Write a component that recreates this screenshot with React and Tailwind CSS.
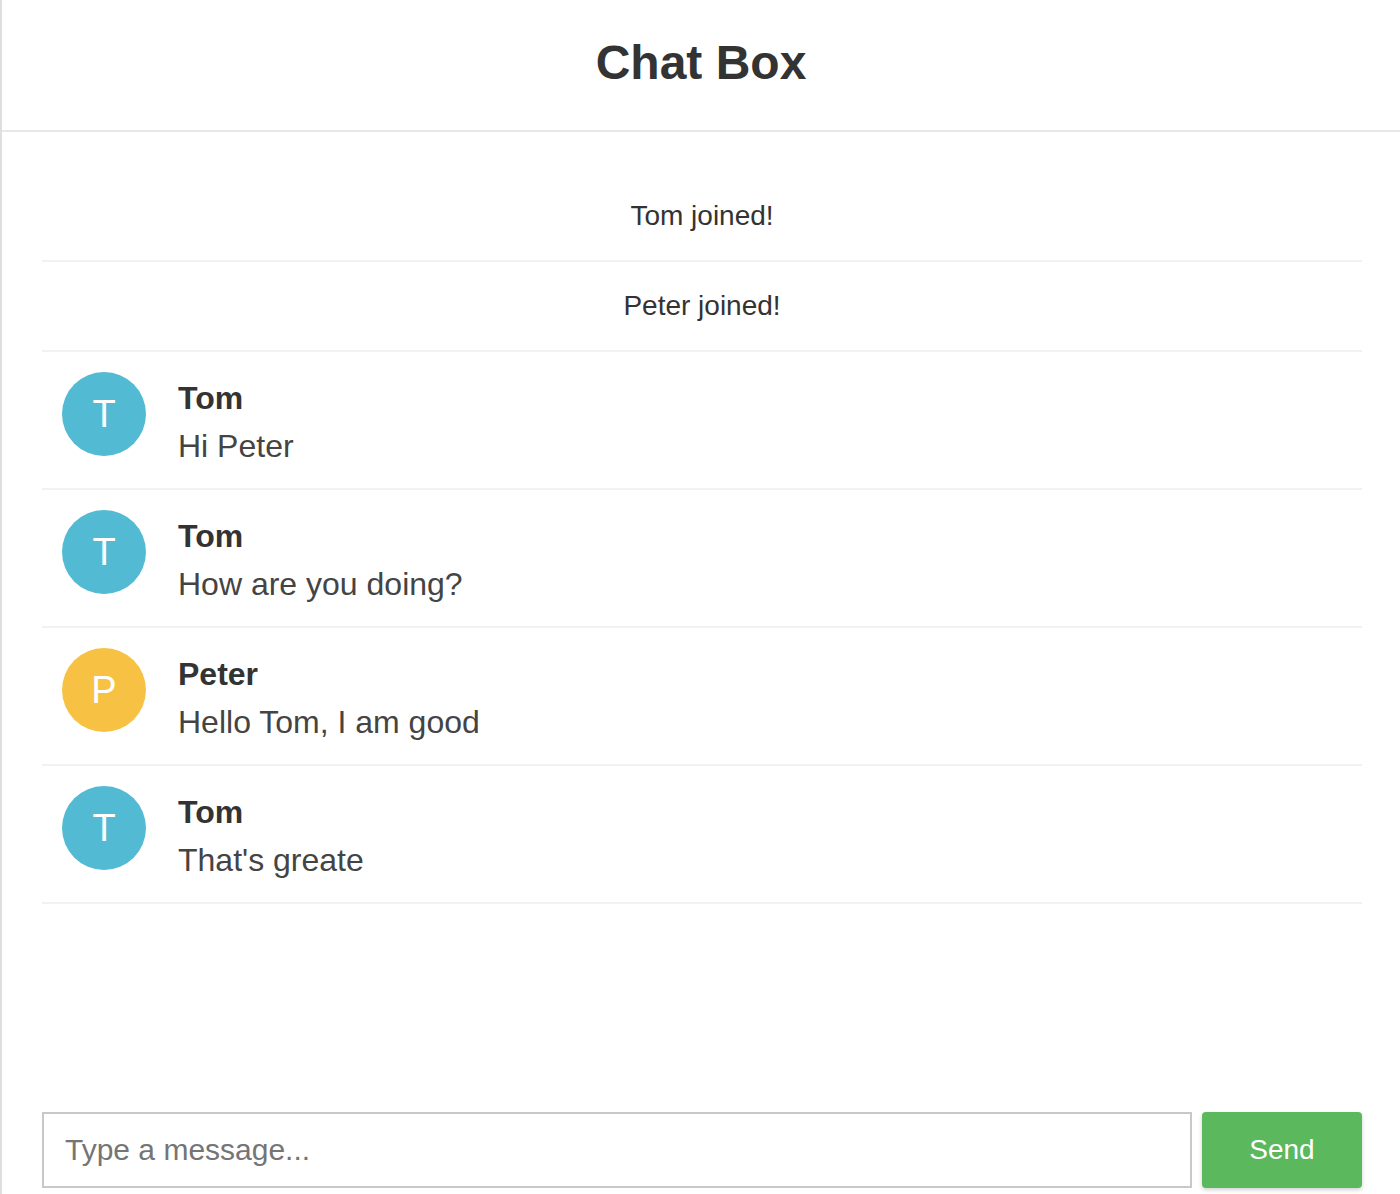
const messages = [
  { type: 'system', text: 'Tom joined!' },
  { type: 'system', text: 'Peter joined!' },
  { type: 'chat', user: 'Tom', text: 'Hi Peter' },
  { type: 'chat', user: 'Tom', text: 'How are you doing?' },
  { type: 'chat', user: 'Peter', text: 'Hello Tom, I am good' },
  { type: 'chat', user: 'Tom', text: "That's greate" },
]

const avatarColor = {
  Tom: 'bg-[#52bad2]',
  Peter: 'bg-[#f7c244]',
}

export default function App() {
  return (
    <div className="h-[1194px] flex flex-col bg-white border-l-2 border-[#dedede] text-[#333] font-['Liberation_Sans',Arial,sans-serif] overflow-hidden">

      <header className="h-[132px] flex-shrink-0 flex items-center justify-center border-b-2 border-[#e8e8e8]">
        <h1 className="text-[48px] font-bold leading-none -mt-[4px]">Chat Box</h1>
      </header>

      <div className="flex-1 pt-10 pl-10 pr-[38px]">
        {messages.map((m, i) =>
          m.type === 'system'
            ? <SystemRow key={i} text={m.text} />
            : <ChatRow key={i} user={m.user} text={m.text} />
        )}
      </div>

      <div className="flex items-stretch gap-[10px] pl-10 pr-[38px] pb-[6px]">
        <input
          type="text"
          placeholder="Type a message..."
          className="flex-1 h-[76px] border-2 border-[#c8c8c8] px-[21px] text-[30px] text-[#333] placeholder:text-[#757575] outline-none"
        />
        <button className="w-[160px] h-[76px] rounded-[4px] bg-[#5cb85c] text-white text-[28px] shadow-[0_2px_4px_rgba(0,0,0,0.18)]">
          Send
        </button>
      </div>

    </div>
  )
}


function SystemRow({ text }) {
  return (
    <div className="py-[23px] text-center text-[28px] leading-[42px] border-b-2 border-[#f2f2f2]">
      {text}
    </div>
  )
}


function ChatRow({ user, text }) {
  return (
    <div className="flex items-start gap-8 px-5 pt-[20px] pb-[20px] border-b-2 border-[#f2f2f2]">
      <div className={`w-[84px] h-[84px] rounded-full flex items-center justify-center text-white text-[38px] flex-shrink-0 ${avatarColor[user]}`}>
        {user[0]}
      </div>
      <div className="leading-[48px] pt-[2px] -mb-[2px]">
        <div className="text-[32px] font-bold text-[#333]">{user}</div>
        <div className="text-[32px] text-[#444]">{text}</div>
      </div>
    </div>
  )
}
